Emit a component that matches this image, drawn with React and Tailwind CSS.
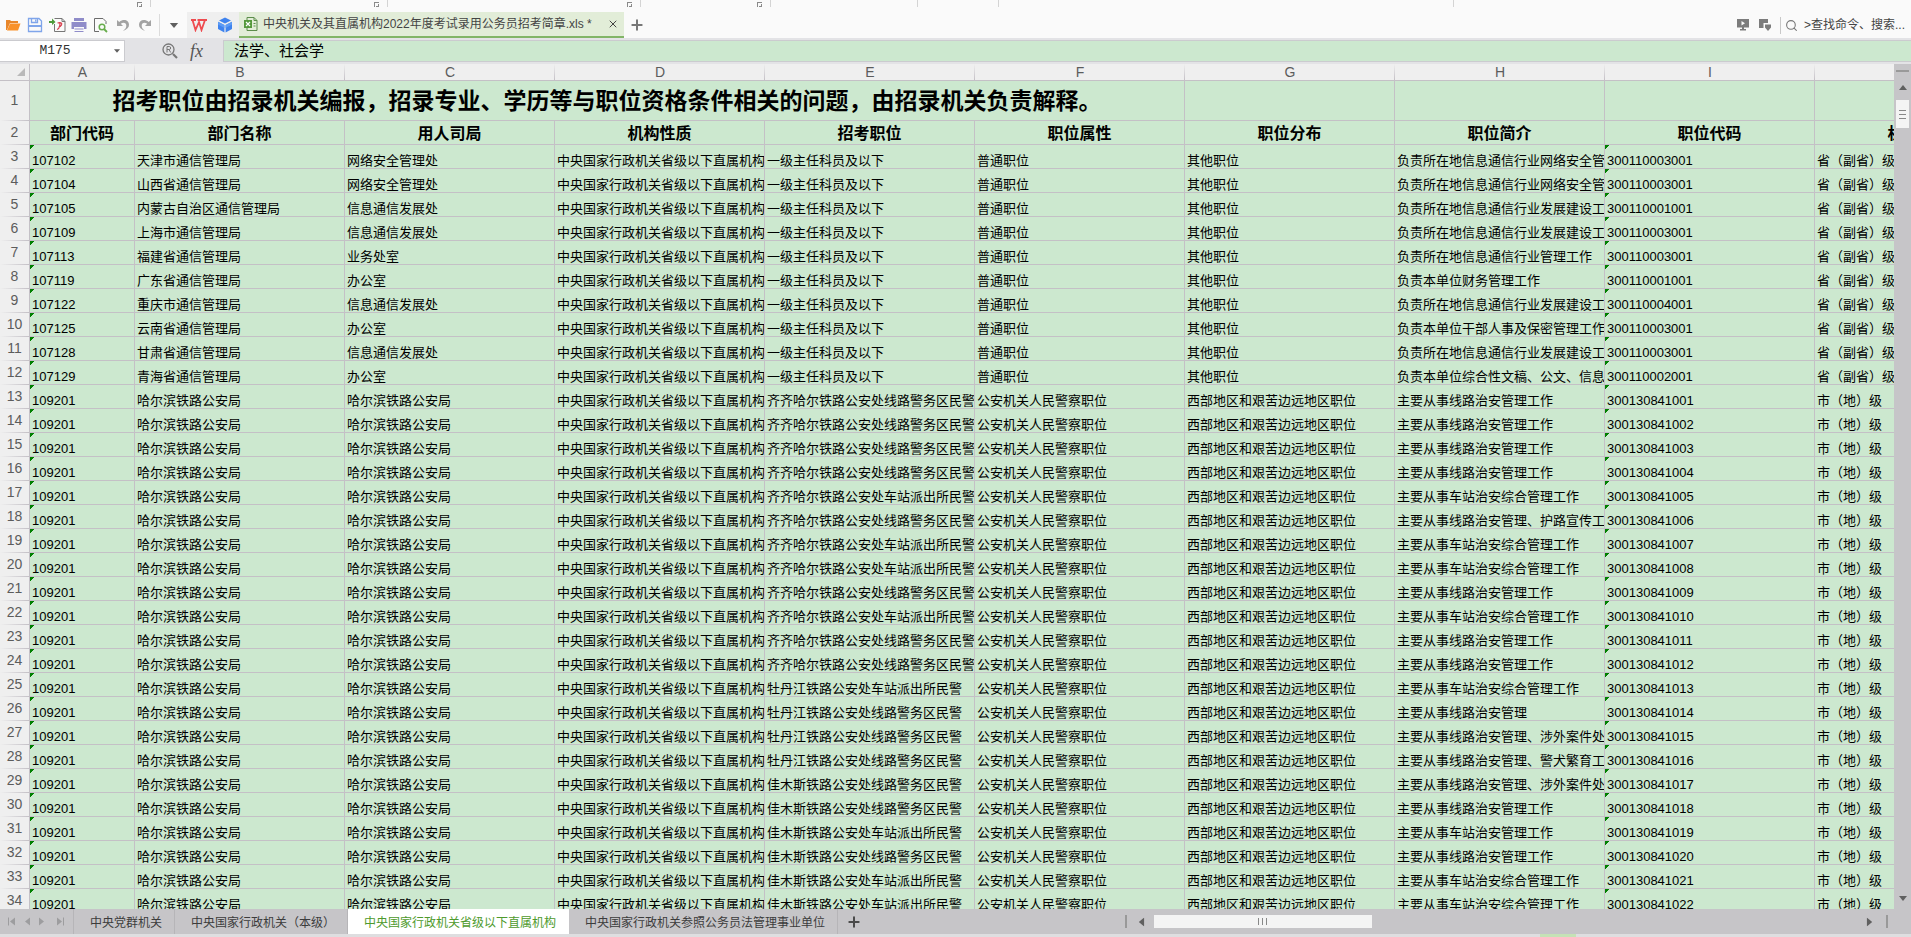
import { useState } from "react";
import { clsx } from "clsx";
import { Plus, Search, X } from "lucide-react";

const columns = [
  { letter: "A", title: "部门代码", width: "w-[105px]" },
  { letter: "B", title: "部门名称", width: "w-[210px]" },
  { letter: "C", title: "用人司局", width: "w-[210px]" },
  { letter: "D", title: "机构性质", width: "w-[210px]" },
  { letter: "E", title: "招考职位", width: "w-[210px]" },
  { letter: "F", title: "职位属性", width: "w-[210px]" },
  { letter: "G", title: "职位分布", width: "w-[210px]" },
  { letter: "H", title: "职位简介", width: "w-[210px]" },
  { letter: "I", title: "职位代码", width: "w-[210px]" },
  { letter: "J", title: "机构层级", width: "w-[210px]" },
];

const ORG = "中央国家行政机关省级以下直属机构";

// Rows 3-12: code, department, office, description, position code
const telecom = [
  ["107102", "天津市通信管理局", "网络安全管理处", "负责所在地信息通信行业网络安全管", "300110003001"],
  ["107104", "山西省通信管理局", "网络安全管理处", "负责所在地信息通信行业网络安全管", "300110003001"],
  ["107105", "内蒙古自治区通信管理局", "信息通信发展处", "负责所在地信息通信行业发展建设工", "300110001001"],
  ["107109", "上海市通信管理局", "信息通信发展处", "负责所在地信息通信行业发展建设工", "300110003001"],
  ["107113", "福建省通信管理局", "业务处室", "负责所在地信息通信行业管理工作", "300110003001"],
  ["107119", "广东省通信管理局", "办公室", "负责本单位财务管理工作", "300110001001"],
  ["107122", "重庆市通信管理局", "信息通信发展处", "负责所在地信息通信行业发展建设工", "300110004001"],
  ["107125", "云南省通信管理局", "办公室", "负责本单位干部人事及保密管理工作", "300110003001"],
  ["107128", "甘肃省通信管理局", "信息通信发展处", "负责所在地信息通信行业发展建设工", "300110003001"],
  ["107129", "青海省通信管理局", "办公室", "负责本单位综合性文稿、公文、信息", "300110002001"],
].map(([code, dept, office, desc, id]) => [
  code, dept, office, ORG, "一级主任科员及以下", "普通职位", "其他职位", desc, id, "省（副省）级",
]);

const LINE = "线路警务区民警";
const STATION = "车站派出所民警";
const LINE_WORK = "主要从事线路治安管理工作";
const STATION_WORK = "主要从事车站治安综合管理工作";

// Rows 13-34: railway office, unit, description
const railway = [
  ["齐齐哈尔", LINE, LINE_WORK],
  ["齐齐哈尔", LINE, LINE_WORK],
  ["齐齐哈尔", LINE, LINE_WORK],
  ["齐齐哈尔", LINE, LINE_WORK],
  ["齐齐哈尔", STATION, STATION_WORK],
  ["齐齐哈尔", LINE, "主要从事线路治安管理、护路宣传工"],
  ["齐齐哈尔", STATION, STATION_WORK],
  ["齐齐哈尔", STATION, STATION_WORK],
  ["齐齐哈尔", LINE, LINE_WORK],
  ["齐齐哈尔", STATION, STATION_WORK],
  ["齐齐哈尔", LINE, LINE_WORK],
  ["齐齐哈尔", LINE, LINE_WORK],
  ["牡丹江", STATION, STATION_WORK],
  ["牡丹江", LINE, "主要从事线路治安管理"],
  ["牡丹江", LINE, "主要从事线路治安管理、涉外案件处"],
  ["牡丹江", LINE, "主要从事线路治安管理、警犬繁育工"],
  ["佳木斯", LINE, "主要从事线路治安管理、涉外案件处"],
  ["佳木斯", LINE, LINE_WORK],
  ["佳木斯", STATION, "主要从事车站治安管理工作"],
  ["佳木斯", LINE, LINE_WORK],
  ["佳木斯", STATION, STATION_WORK],
  ["佳木斯", STATION, STATION_WORK],
].map(([city, unit, desc], i) => [
  "109201",
  "哈尔滨铁路公安局",
  "哈尔滨铁路公安局",
  ORG,
  `${city}铁路公安处${unit}`,
  "公安机关人民警察职位",
  "西部地区和艰苦边远地区职位",
  desc,
  String(300130841001 + i),
  "市（地）级",
]);

const rows = [...telecom, ...railway];

const sheets = [
  "中央党群机关",
  "中央国家行政机关（本级）",
  "中央国家行政机关省级以下直属机构",
  "中央国家行政机关参照公务员法管理事业单位",
];

const ribbonGroups = [
  { width: "w-[151px]", launcher: true },
  { width: "w-[237px]", launcher: true },
  { width: "w-[253px]", launcher: true },
  { width: "w-[130px]", launcher: true },
  { width: "w-[147px]", launcher: false },
  { width: "w-[81px]", launcher: false },
  { width: "w-[455px]", launcher: false },
];

function Ribbon() {
  return (
    <div className="flex h-3 shrink-0 items-start">
      {ribbonGroups.map((group) => (
        <div
          key={group.width}
          className={clsx("flex h-[7px] items-end justify-end border-r border-[#d4d4d4] pr-2", group.width)}
        >
          {group.launcher && (
            <svg className="h-[5px] w-[5px]" viewBox="0 0 5 5" shapeRendering="crispEdges" aria-hidden="true">
              <path d="M0 0h5v1H1v4H0zM4 2h1v3H2V4h2z" fill="#8a8a8a" />
            </svg>
          )}
        </div>
      ))}
    </div>
  );
}

function ToolButton({ label, className, children }) {
  return (
    <button type="button" aria-label={label} className={clsx("flex h-full shrink-0 items-center justify-center", className)}>
      {children}
    </button>
  );
}

function FolderIcon() {
  return (
    <svg width="16" height="16" viewBox="0 0 16 16">
      <path d="M1 3h4l1 1h7v2H5L2 13H1z" fill="#e8862a" />
      <path d="M5 6.500h10.500L13 13.500H2z" fill="#f9922b" />
    </svg>
  );
}

function SaveIcon() {
  return (
    <svg width="16" height="16" viewBox="0 0 16 16" fill="none" stroke="#7fa5ea" strokeWidth="1.300">
      <path d="M1.500 1.500H12l2.500 2.500v10.500h-13z" />
      <path d="M4.500 1.500v4h6v-4M8.700 2.500v2" />
      <path d="M1.500 9h13" strokeWidth="2" />
    </svg>
  );
}

function PdfIcon() {
  return (
    <svg width="17" height="16" viewBox="0 0 17 16" fill="none">
      <path d="M5.500 1.500H13l3 3v10H5.500V7" stroke="#777" />
      <path d="M13 1.500v3h3" stroke="#777" />
      <path d="M8.500 6c3-1 5 0 4 2s-3 2-3 2M11 6c0 3-1 6-3 6.500" stroke="#d8404f" strokeWidth="1.200" />
      <path d="M0 4h3V1.500L6.500 5 3 8V6H0z" fill="#4d9a3a" />
    </svg>
  );
}

function PrintIcon() {
  return (
    <svg width="16" height="16" viewBox="0 0 16 16">
      <path d="M3 1h10v3H3zM0.500 5h15v7H13v-2H3v2H0.500zM3.500 11.500h9v1h-9zM3.500 14h9v1h-9z" fill="#8f8cc9" />
    </svg>
  );
}

function PreviewIcon() {
  return (
    <svg width="16" height="16" viewBox="0 0 16 16" fill="none">
      <path d="M6 14.500H1.500v-13H10l3 3V7" stroke="#6c6c6c" />
      <circle cx="9" cy="10" r="2.800" stroke="#68ad4d" strokeWidth="1.500" />
      <path d="m11 12 3 3" stroke="#68ad4d" strokeWidth="1.800" />
    </svg>
  );
}

function UndoIcon({ flipped }) {
  return (
    <svg width="14" height="14" viewBox="0 0 14 14" className={clsx(flipped && "-scale-x-100")}>
      <path d="M1 2v6h6L4.800 5.800C7.500 3.800 10.500 5 10.300 8c-.1 2-1.500 3.500-3.300 5C11 11.500 13 9.500 13 6.800 13 2 7.500.5 3.300 4z" fill="#a3a3a3" />
    </svg>
  );
}

function CaretDown({ className }) {
  return (
    <svg viewBox="0 0 10 6" className={className} aria-hidden="true">
      <path d="M0 0h10L5 6z" fill="currentColor" />
    </svg>
  );
}

function WpsLogo() {
  return (
    <svg width="16" height="14" viewBox="0 0 16 14" fill="none" stroke="#ee4b4f" strokeWidth="1.800">
      <path d="M0 2h5M1.500 2l3 10L8 4l2.500 8L14 2M6.500 2H16" />
    </svg>
  );
}

function CubeLogo() {
  return (
    <svg width="16" height="16" viewBox="0 0 16 16">
      <path d="M8 .5 14 3.500 8 6.500 2 3.500z" fill="#3f83ee" />
      <path d="M1 4.800 7.400 8v7.500L1 12zM15 4.800 8.600 8v7.500L15 12z" fill="#3f83ee" />
      <path d="M1 4.800 7.400 8v3L1 7.500zM15 4.800 8.600 8v3L15 7.500z" fill="#5c9bf5" />
    </svg>
  );
}

function XlsIcon() {
  return (
    <svg width="14" height="14" viewBox="0 0 14 14" fill="none">
      <path d="M3 3V.5h7l3 3v10H3V11" stroke="#5b8c4a" />
      <path d="M10 .5v3h3" stroke="#5b8c4a" />
      <path d="M0 3h8v8H0z" fill="#55993c" />
      <path d="m2 5 4 4M6 5 2 9" stroke="#fff" strokeWidth="1.200" />
      <path d="M9.500 6.500h2M9.500 9h2" stroke="#5b8c4a" />
    </svg>
  );
}

function Toolbar() {
  return (
    <div className="flex h-[26px] shrink-0 items-center">
      <div className="flex h-full items-center pl-[2px]">
        <ToolButton label="打开" className="w-[22px]"><FolderIcon /></ToolButton>
        <ToolButton label="保存" className="w-[22px]"><SaveIcon /></ToolButton>
        <ToolButton label="输出为PDF" className="w-[22px]"><PdfIcon /></ToolButton>
        <ToolButton label="打印" className="w-[22px]"><PrintIcon /></ToolButton>
        <ToolButton label="打印预览" className="w-[22px]"><PreviewIcon /></ToolButton>
        <ToolButton label="撤销" className="w-[22px]"><UndoIcon /></ToolButton>
        <ToolButton label="恢复" className="w-[22px]"><UndoIcon flipped /></ToolButton>
      </div>
      <div className="ml-[3px] h-[22px] w-px bg-[#dcdcdc]" />
      <ToolButton label="自定义快速访问工具栏" className="w-[27px]">
        <CaretDown className="h-[5px] w-[10px] text-[#5f5f5f]" />
      </ToolButton>

      <div className="flex h-full w-[52px] items-center gap-[10px] bg-[#efefef] pl-1">
        <ToolButton label="首页"><WpsLogo /></ToolButton>
        <ToolButton label="稻壳商城"><CubeLogo /></ToolButton>
      </div>
      <div className="flex h-full w-[385px] shrink-0 items-center border-b-2 border-[#82b567] bg-[#e2edd8] pl-[5px]">
        <XlsIcon />
        <span className="ml-[5px] flex-1 whitespace-nowrap text-xs text-[#444]">
          中央机关及其直属机构2022年度考试录用公务员招考简章.xls *
        </span>
        <ToolButton label="关闭" className="w-[22px]">
          <X className="h-3 w-3 text-[#444]" strokeWidth={2} />
        </ToolButton>
      </div>
      <ToolButton label="新建" className="w-[26px]">
        <Plus className="h-4 w-4 text-[#777]" strokeWidth={3} />
      </ToolButton>

      <div className="ml-auto flex h-full items-center pr-[6px]">
        <ToolButton label="放映" className="w-[22px]">
          <svg width="12" height="12" viewBox="0 0 12 12" fill="#7c7c7c">
            <path d="M0 0h12v8.500H7V10h2v1.500H3V10h2V8.500H0zM4.500 2v4.500L8 4.200z" fillRule="evenodd" />
          </svg>
        </ToolButton>
        <ToolButton label="皮肤" className="w-[22px]">
          <svg width="12" height="12" viewBox="0 0 12 12" fill="#7c7c7c">
            <path d="M0 0h9v4H4.500v5H0zM6 5.500h6v3L9 12 6 8.500z" />
          </svg>
        </ToolButton>
        <div className="mx-1 h-[17px] w-px bg-[#c8c8c8]" />
        <button type="button" className="flex items-center gap-[6px] text-xs text-[#444]">
          <Search className="h-[13px] w-[13px] text-[#777]" strokeWidth={2} />
          <span className="whitespace-nowrap">&gt;查找命令、搜索...</span>
        </button>
      </div>
    </div>
  );
}

function FormulaBar() {
  const [cell, setCell] = useState("M175");
  const [formula, setFormula] = useState("法学、社会学");

  return (
    <div className="flex h-[26px] shrink-0 items-center bg-[#e3e3e6]">
      <div className="flex h-[22px] w-[125px] shrink-0 items-center border border-l-0 border-[#cbcbcf] bg-white">
        <input
          aria-label="名称框"
          value={cell}
          onChange={(e) => setCell(e.target.value)}
          className="w-[110px] bg-transparent text-center font-['Liberation_Mono',monospace] text-[13px] text-[#333] outline-none"
        />
        <ToolButton label="选择名称" className="flex-1">
          <CaretDown className="h-1 w-[6px] text-[#5f5f5f]" />
        </ToolButton>
      </div>
      <div className="flex w-[98px] shrink-0 items-center justify-end gap-3 pr-5">
        <ToolButton label="查找函数">
          <svg width="16" height="16" viewBox="0 0 16 16" fill="none" stroke="#777">
            <circle cx="6.500" cy="6.500" r="5.500" strokeWidth="1.300" />
            <path d="m11 11 4 4" strokeWidth="2.200" />
            <path d="M5 9.500v-6h2.200c2 0 2 3 0 3H5M7 6.500l1.700 3" />
          </svg>
        </ToolButton>
        <ToolButton label="插入函数">
          <i className="font-['Liberation_Serif',serif] text-lg leading-4 text-[#555]">fx</i>
        </ToolButton>
      </div>
      <input
        aria-label="编辑栏"
        value={formula}
        onChange={(e) => setFormula(e.target.value)}
        className="h-[22px] min-w-0 flex-1 border border-r-0 border-[#cbcbcf] bg-[#cce8cf] pl-[10px] text-[15px] text-black outline-none"
      />
    </div>
  );
}

function RowNumber({ children }) {
  return (
    <th
      scope="row"
      className="border-r border-[#c4c0c6] bg-[#efefef] bg-[linear-gradient(to_right,#efefef,#c4c0c6)] bg-[length:100%_1px] bg-bottom bg-no-repeat p-0 pb-[3px] text-center text-sm leading-4 font-normal text-[#5c5c5c]"
    >
      {children}
    </th>
  );
}

function Grid() {
  return (
    <div className="min-w-0 flex-1 overflow-hidden bg-[#cce8cf]">
      <table className="w-[2025px] table-fixed border-separate border-spacing-0 text-black">
        <thead>
          <tr className="h-[17px]">
            <th className="w-[30px] border-r border-b border-[#c4c0c6] bg-[#efefef] p-0" aria-label="全选">
              <svg className="mr-1 ml-auto h-2 w-2" viewBox="0 0 8 8" aria-hidden="true">
                <path d="M8 0v8H0z" fill="#b9b9b9" />
              </svg>
            </th>
            {columns.map((col) => (
              <th
                key={col.letter}
                scope="col"
                className={clsx(
                  "border-b border-[#c4c0c6] bg-[#efefef] bg-[linear-gradient(to_bottom,#efefef,#c4c0c6)] bg-[length:1px_100%] bg-right bg-no-repeat p-0 text-sm leading-4 font-normal text-[#5c5c5c]",
                  col.width
                )}
              >
                {col.letter}
              </th>
            ))}
          </tr>
        </thead>
        <tbody>
          <tr className="h-10">
            <RowNumber>1</RowNumber>
            <td
              colSpan={6}
              className="border-r border-b border-[#c4c0c6] p-0 text-center text-[23px] leading-8 font-bold whitespace-nowrap"
            >
              招考职位由招录机关编报，招录专业、学历等与职位资格条件相关的问题，由招录机关负责解释。
            </td>
            {["G", "H", "I", "J"].map((letter) => (
              <td key={letter} className="border-r border-b border-[#c4c0c6]" />
            ))}
          </tr>
          <tr className="h-6">
            <RowNumber>2</RowNumber>
            {columns.map((col) => (
              <td
                key={col.letter}
                className="border-r border-b border-[#c4c0c6] p-0 pt-[2px] text-center text-base leading-5 font-bold whitespace-nowrap"
              >
                {col.title}
              </td>
            ))}
          </tr>
          {rows.map((row, i) => (
            <tr key={i} className="h-6">
              <RowNumber>{i + 3}</RowNumber>
              {row.map((value, c) => (
                <td
                  key={c}
                  className={clsx(
                    "overflow-hidden border-r border-b border-[#c4c0c6] p-0 pl-[2px] align-bottom text-[13px] leading-[14px] whitespace-nowrap",
                    // numbers stored as text carry the green corner mark
                    (c === 0 || c === 8) && "bg-[linear-gradient(135deg,#008000_3px,transparent_3px)]"
                  )}
                >
                  {value}
                </td>
              ))}
            </tr>
          ))}
        </tbody>
      </table>
    </div>
  );
}

function VerticalScrollbar() {
  return (
    <div className="flex w-[17px] shrink-0 flex-col items-center bg-[#c6c5c8] pt-[6px] pb-2 text-[#606060]">
      <div className="h-[2px] w-[13px] bg-[#999]" />
      <button type="button" aria-label="向上滚动" className="mt-[13px]">
        <CaretDown className="h-[5px] w-2 rotate-180" />
      </button>
      <div className="mt-[10px] flex h-7 w-[13px] flex-col items-center justify-center gap-[3px] bg-[#f4f4f4]">
        <span className="h-px w-[7px] bg-[#888]" />
        <span className="h-px w-[7px] bg-[#888]" />
        <span className="h-px w-[7px] bg-[#888]" />
      </div>
      <button type="button" aria-label="向下滚动" className="mt-auto">
        <CaretDown className="h-[5px] w-2" />
      </button>
    </div>
  );
}

function SheetBar() {
  const [active, setActive] = useState(2);

  return (
    <div className="flex h-[25px] shrink-0 bg-[#c6c5c8]">
      <div className="flex w-[74px] shrink-0 items-center border-r border-[#b6b5b8] pl-2 text-[#9d9d9f]">
        <ToolButton label="第一个工作表">
          <svg width="8" height="9" viewBox="0 0 8 8" fill="currentColor"><path d="M0 0h1v8H0zM7 0v8L2 4z" /></svg>
        </ToolButton>
        <ToolButton label="上一个工作表" className="ml-[9px]">
          <svg width="6" height="9" viewBox="0 0 6 8" fill="currentColor"><path d="M5 0v8L0 4z" /></svg>
        </ToolButton>
        <ToolButton label="下一个工作表" className="ml-[7px]">
          <svg width="6" height="9" viewBox="0 0 6 8" fill="currentColor"><path d="M1 0v8l5-4z" /></svg>
        </ToolButton>
        <ToolButton label="最后一个工作表" className="ml-3">
          <svg width="8" height="9" viewBox="0 0 8 8" fill="currentColor"><path d="M7 0h1v8H7zM1 0v8l5-4z" /></svg>
        </ToolButton>
      </div>

      <div className="flex min-w-0 flex-1">
        {sheets.map((name, i) => (
          <button
            key={name}
            type="button"
            onClick={() => setActive(i)}
            className={clsx(
              "h-full shrink-0 border-r pt-[2px] pr-3 pl-4 text-xs whitespace-nowrap",
              i === active ? "border-white bg-white text-[#4e9a2c]" : "border-[#b6b5b8] text-[#3c3c3c]"
            )}
          >
            {name}
          </button>
        ))}
        <ToolButton label="新建工作表" className="w-8">
          <Plus className="h-4 w-4 text-[#4a4a4a]" strokeWidth={3} />
        </ToolButton>
      </div>

      <div className="flex w-[786px] shrink-0 items-center pr-[23px] text-[#606060]">
        <div className="h-[13px] w-[2px] shrink-0 bg-[#999]" />
        <button type="button" aria-label="向左滚动" className="ml-[10px]">
          <CaretDown className="h-[6px] w-[9px] rotate-90" />
        </button>
        <div className="mr-2 ml-2 flex-1">
          <div className="flex h-[13px] w-[31%] items-center justify-center gap-[3px] bg-[#f4f4f4]">
            <span className="h-[7px] w-px bg-[#888]" />
            <span className="h-[7px] w-px bg-[#888]" />
            <span className="h-[7px] w-px bg-[#888]" />
          </div>
        </div>
        <button type="button" aria-label="向右滚动" className="mr-3">
          <CaretDown className="h-[6px] w-[9px] -rotate-90" />
        </button>
        <div className="h-[13px] w-[2px] shrink-0 bg-[#999]" />
      </div>
    </div>
  );
}

export default function App() {
  return (
    <div className="flex h-screen flex-col overflow-hidden bg-[#fafafa] font-['Liberation_Sans','Noto_Sans_CJK_SC',sans-serif]">
      <Ribbon />
      <Toolbar />
      <FormulaBar />
      <div className="flex min-h-0 flex-1">
        <Grid />
        <VerticalScrollbar />
      </div>
      <SheetBar />
      {/* Status bar edge with the active view highlighted */}
      <div className="flex h-[3px] shrink-0 justify-end bg-[#dedee0] pr-[335px]">
        <div className="w-9 bg-[#c5e2b6]" />
      </div>
    </div>
  );
}
